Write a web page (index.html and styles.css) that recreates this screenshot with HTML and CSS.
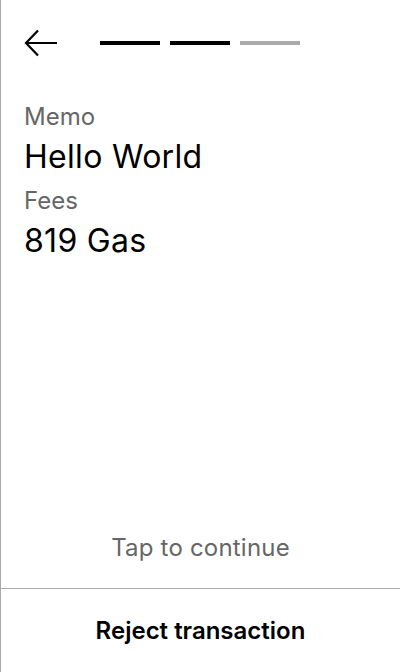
FILE: index.html
```html
<!DOCTYPE html>
<html>
<head>
<meta charset="utf-8">
<link rel="stylesheet" href="styles.css">
</head>
<body>
<div class="screen">
  <header class="header">
    <svg class="back" width="34" height="28" viewBox="0 0 34 28">
      <path d="M33 14 H2 M14 1.5 L2 14 L14 26.5" fill="none" stroke="#000" stroke-width="2.2"/>
    </svg>
    <div class="steps">
      <span class="step done"></span>
      <span class="step done"></span>
      <span class="step"></span>
    </div>
  </header>
  <main class="content">
    <div class="label">Memo</div>
    <div class="value">Hello World</div>
    <div class="label">Fees</div>
    <div class="value">819 Gas</div>
  </main>
  <div class="tap">Tap to continue</div>
  <footer class="footer">Reject transaction</footer>
</div>
</body>
</html>
```
FILE: styles.css
```css
html, body {
  margin: 0;
  padding: 0;
  background: #fff;
}
body {
  font-family: Inter, "Noto Sans", sans-serif;
  color: #000;
}
.screen {
  width: 399px;
  height: 672px;
  border-left: 1px solid #aaa;
  display: flex;
  flex-direction: column;
}
.header {
  display: flex;
  align-items: center;
  padding: 29px 0 0 23px;
  height: 28px;
}
.back {
  display: block;
}
.steps {
  display: flex;
  gap: 10px;
  margin-left: 42px;
}
.step {
  display: block;
  width: 60px;
  height: 4px;
  background: #aaa;
}
.step.done {
  background: #000;
}
.content {
  flex: 1;
  padding: 45px 0 0 23px;
}
.label {
  font-size: 24px;
  line-height: 29px;
  color: #666;
  margin-bottom: 7px;
}
.value {
  font-size: 32px;
  line-height: 38px;
  letter-spacing: 0.3px;
  margin-bottom: 10px;
}
.tap {
  text-align: center;
  font-size: 24px;
  line-height: 29px;
  letter-spacing: 0.2px;
  color: #666;
  padding-bottom: 26px;
}
.footer {
  border-top: 1px solid #aaa;
  height: 83px;
  display: flex;
  align-items: center;
  justify-content: center;
  font-size: 24px;
  font-weight: 600;
}
```
